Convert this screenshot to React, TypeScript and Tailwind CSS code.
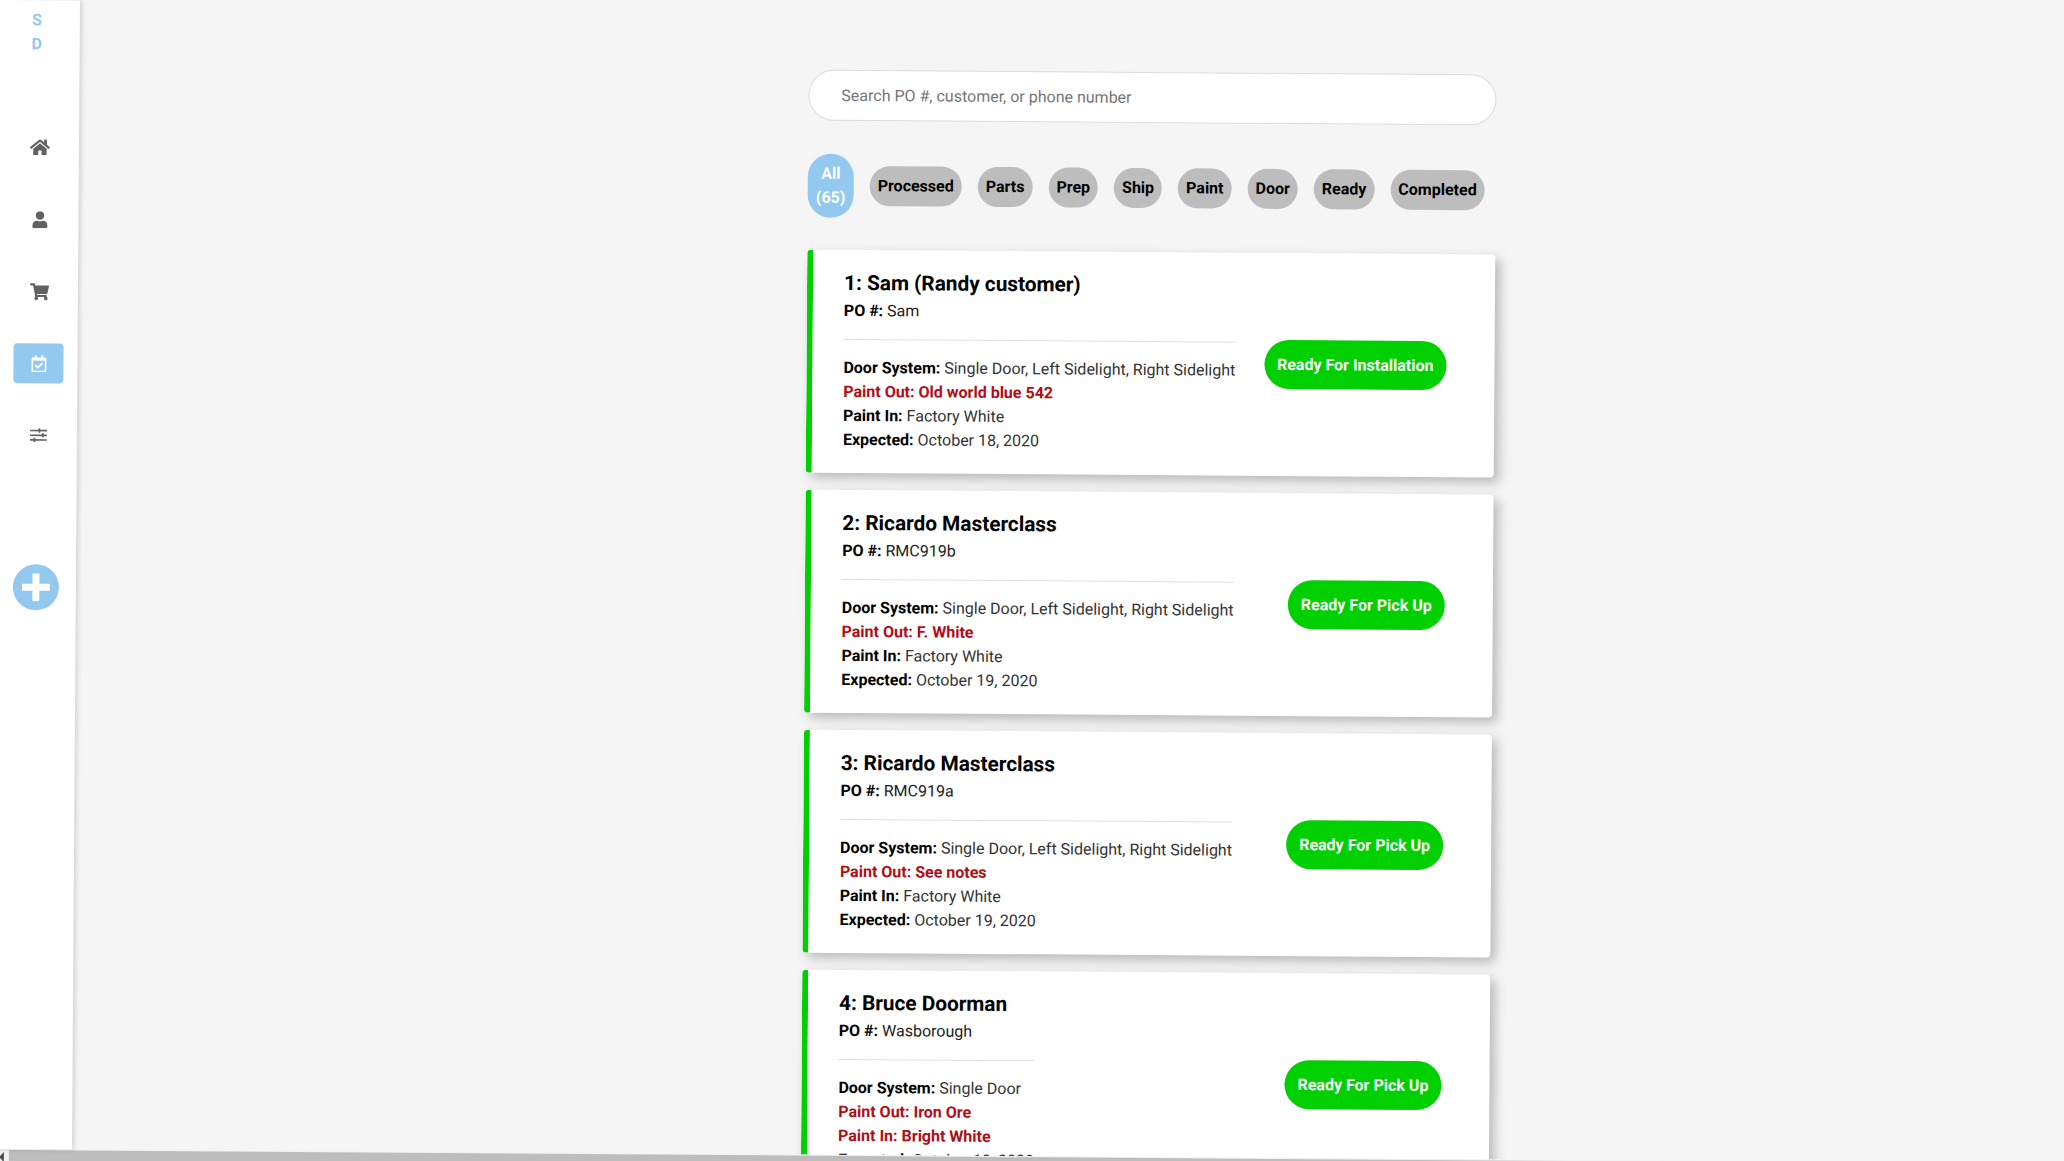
import React from "react";
import { FaHome, FaUser, FaShoppingCart, FaRegCalendarCheck } from "react-icons/fa";

const filters = ["Processed", "Parts", "Prep", "Ship", "Paint", "Door", "Ready", "Completed"];

type Order = {
  title: string;
  po: string;
  door: string;
  paintOut: string;
  paintIn: string;
  paintInWarn?: boolean;
  expected: string;
  action: string;
};

const orders: Order[] = [
  {
    title: "1: Sam (Randy customer)",
    po: "Sam",
    door: "Single Door, Left Sidelight, Right Sidelight",
    paintOut: "Old world blue 542",
    paintIn: "Factory White",
    expected: "October 18, 2020",
    action: "Ready For Installation",
  },
  {
    title: "2: Ricardo Masterclass",
    po: "RMC919b",
    door: "Single Door, Left Sidelight, Right Sidelight",
    paintOut: "F. White",
    paintIn: "Factory White",
    expected: "October 19, 2020",
    action: "Ready For Pick Up",
  },
  {
    title: "3: Ricardo Masterclass",
    po: "RMC919a",
    door: "Single Door, Left Sidelight, Right Sidelight",
    paintOut: "See notes",
    paintIn: "Factory White",
    expected: "October 19, 2020",
    action: "Ready For Pick Up",
  },
  {
    title: "4: Bruce Doorman",
    po: "Wasborough",
    door: "Single Door",
    paintOut: "Iron Ore",
    paintIn: "Bright White",
    paintInWarn: true,
    expected: "October 19, 2020",
    action: "Ready For Pick Up",
  },
];

const TuneIcon = () => (
  <svg width="17" height="14" viewBox="0 0 17 14" fill="#616161">
    <rect x="0" y="1.5" width="17" height="1.6" />
    <rect x="0" y="6.2" width="17" height="1.6" />
    <rect x="0" y="10.9" width="17" height="1.6" />
    <rect x="8.5" y="0" width="1.8" height="4.4" />
    <rect x="12" y="5" width="1.8" height="4" />
    <rect x="3.6" y="9.6" width="1.8" height="4.4" />
  </svg>
);

const PlusIcon = () => (
  <svg width="28" height="28" viewBox="0 0 28 28" fill="white">
    <rect x="10.5" y="0" width="7" height="28" rx="1" />
    <rect x="0" y="10.5" width="28" height="7" rx="1" />
  </svg>
);

const Sidebar = () => (
  <aside className="w-[80px] shrink-0 bg-white flex flex-col items-center shadow-[2px_0_5px_rgba(0,0,0,0.15)] z-10">
    <div className="pt-2 pr-[6px] text-center text-base font-bold leading-6 text-[#93c9ef]">
      <div>S</div>
      <div>D</div>
    </div>
    <nav className="mt-[71px] ml-[2px] flex flex-col gap-8 text-[#616161]">
      <a className="flex h-10 w-[50px] items-center justify-center rounded"><FaHome size={20} /></a>
      <a className="flex h-10 w-[50px] items-center justify-center rounded"><FaUser size={17} /></a>
      <a className="flex h-10 w-[50px] items-center justify-center rounded"><FaShoppingCart size={19} /></a>
      <a className="flex h-10 w-[50px] items-center justify-center rounded bg-[#93c9ef] text-white"><FaRegCalendarCheck size={17} /></a>
      <a className="flex h-10 w-[50px] items-center justify-center rounded"><TuneIcon /></a>
    </nav>
    <button className="mt-[109px] flex h-[46px] w-[46px] items-center justify-center rounded-full bg-[#93c9ef] text-white">
      <PlusIcon />
    </button>
  </aside>
);

const OrderCard = ({ order }: { order: Order }) => (
  <div className="flex h-[223px] shrink-0 items-center justify-between rounded border-l-[6px] border-[#00cf00] bg-white pl-[31px] pr-[48px] shadow-[5px_5px_12px_rgba(0,0,0,0.25)]">
    <div className="w-fit">
      <h2 className="text-[20.8px] font-bold leading-6 text-black">{order.title}</h2>
      <p className="mt-1 text-base leading-6 text-[#212121]">
        <b className="font-bold text-black">PO #:</b> {order.po}
      </p>
      <hr className="mt-4 border-[#e0e0e0]" />
      <div className="mt-4 text-base leading-6 text-[#333333]">
        <p>
          <b className="font-bold text-black">Door System:</b> {order.door}
        </p>
        <p className="font-bold text-[#b00d17]">Paint Out: {order.paintOut}</p>
        {order.paintInWarn ? (
          <p className="font-bold text-[#b00d17]">Paint In: {order.paintIn}</p>
        ) : (
          <p>
            <b className="font-bold text-black">Paint In:</b> {order.paintIn}
          </p>
        )}
        <p>
          <b className="font-bold text-black">Expected:</b> {order.expected}
        </p>
      </div>
    </div>
    <button className="rounded-[25px] bg-[#00cf00] px-[13px] py-[12px] text-base font-bold leading-[25px] text-white">
      {order.action}
    </button>
  </div>
);

const App = () => {
  return (
    <div className="h-screen w-full overflow-hidden bg-[#f5f5f5] font-['Roboto',sans-serif]">
      {/* the capture is tilted a little, so the whole page is too */}
      <div className="flex h-[1175px] w-[2110px] origin-top-left rotate-[0.4deg] flex-col">
        <div className="flex h-[1149px] shrink-0">
          <Sidebar />
          <main className="flex-1 overflow-hidden pl-[729px]">
            <div className="flex w-[688px] flex-col pt-16">
              <input
                placeholder="Search PO #, customer, or phone number"
                className="h-[51px] w-[688px] rounded-[26px] border border-[#dcdcdc] bg-white pl-[32px] text-base text-black outline-none placeholder:text-[#757575]"
              />
              <div className="mt-[33px] flex items-center gap-4">
                <button className="w-[46px] rounded-[23px] bg-[#93c9ef] py-2 text-base font-bold leading-6 text-white">
                  All (65)
                </button>
                {filters.map((f) => (
                  <button key={f} className="rounded-[20px] bg-[#bdbdbd] px-2 py-2 text-base font-bold leading-6 text-black">
                    {f}
                  </button>
                ))}
              </div>
              <div className="mt-8 flex flex-col gap-[17px]">
                {orders.map((o) => (
                  <OrderCard key={o.title} order={o} />
                ))}
              </div>
            </div>
          </main>
        </div>
        <div className="flex h-[26px] shrink-0 items-start bg-[#f1f1f1] pt-[1px]">
          <span className="mt-[2px] ml-[7px] h-0 w-0 border-y-[5px] border-r-[5px] border-y-transparent border-r-[#505050]" />
          <div className="ml-[5px] h-6 flex-1 bg-[#bdbdbd]" />
        </div>
      </div>
    </div>
  );
};

export default App;
